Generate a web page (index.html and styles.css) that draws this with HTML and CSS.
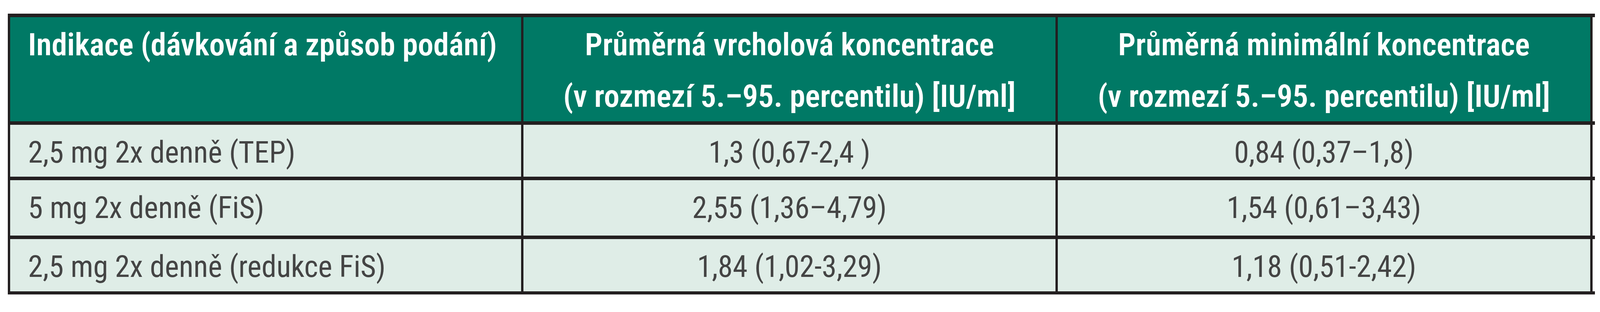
FILE: index.html
```html
<!DOCTYPE html>
<html lang="cs">
<head>
<meta charset="utf-8">
<title>Tabulka koncentrací</title>
<link rel="stylesheet" href="styles.css">
</head>
<body>
<div class="tbl">
  <div class="row head">
    <div class="cell first">Indikace (dávkování a způsob podání)</div>
    <div class="cell mid">Průměrná vrcholová koncentrace<br>(v rozmezí 5.–95. percentilu) [IU/ml]</div>
    <div class="cell mid last">Průměrná minimální koncentrace<br>(v rozmezí 5.–95. percentilu) [IU/ml]</div>
  </div>
  <div class="row body r1">
    <div class="cell first">2,5 mg 2x denně (TEP)</div>
    <div class="cell mid">1,3 (0,67-2,4 )</div>
    <div class="cell mid last">0,84 (0,37–1,8)</div>
  </div>
  <div class="row body r2">
    <div class="cell first">5 mg 2x denně (FiS)</div>
    <div class="cell mid">2,55 (1,36–4,79)</div>
    <div class="cell mid last">1,54 (0,61–3,43)</div>
  </div>
  <div class="row body r3">
    <div class="cell first">2,5 mg 2x denně (redukce FiS)</div>
    <div class="cell mid">1,84 (1,02-3,29)</div>
    <div class="cell mid last">1,18 (0,51-2,42)</div>
  </div>
</div>
</body>
</html>
```
FILE: styles.css
```css
html, body {
  margin: 0;
  padding: 0;
  background: #ffffff;
}
body {
  font-family: "Roboto Condensed", "Liberation Sans", sans-serif;
  line-height: 132px;
}
.tbl {
  margin: 35px 0 0 0.4875vw;
  width: 99.187vw;
  border-bottom: 8px solid #231f20;
}
.row {
  display: grid;
  grid-template-columns: 1777fr 1849fr 1859fr;
  padding-right: 0.1445vw;
  border-top: 9px solid #231f20;
}
.cell {
  box-sizing: border-box;
  min-width: 0;
  border-left: 0.1625vw solid #231f20;
  white-space: nowrap;
  padding-top: 5px;
}
.cell.last {
  border-right: 0.1625vw solid #231f20;
}
.first {
  padding-left: 1.12vw;
}
.mid {
  text-align: center;
}
.head .cell {
  height: 267px;
  background: #007965;
  color: #ffffff;
  font-size: 1.95vw;
  font-weight: 600;
}
.body .cell {
  background: #dfede7;
  color: #444444;
  font-size: 1.88vw;
  font-weight: 400;
}
.r1 .cell { height: 133px; }
.r2 .cell { height: 142px; }
.r3 .cell { height: 134px; }
```
